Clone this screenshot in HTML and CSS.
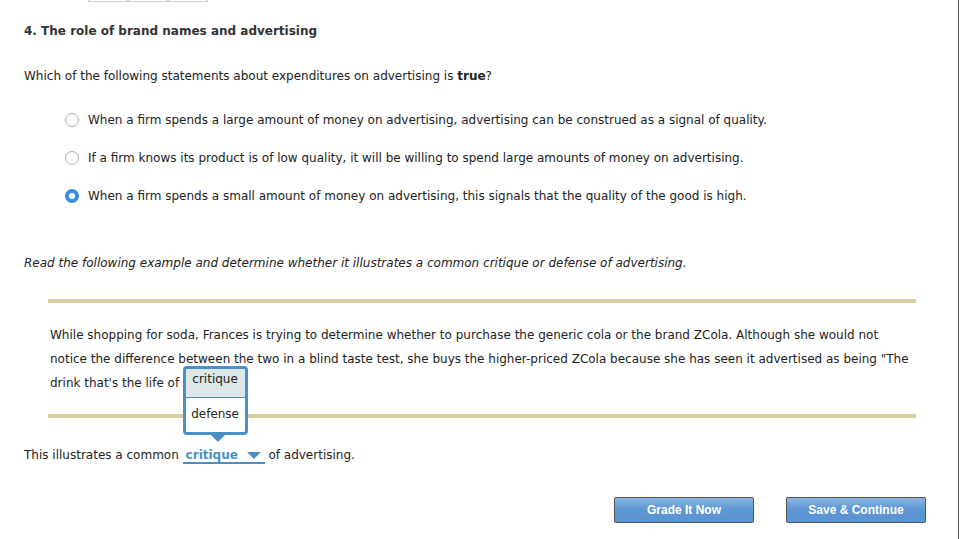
FILE: index.html
```html
<!DOCTYPE html>
<html>
    <head>
        <meta name="viewport" content="width=device-width, initial-scale=1.0">
        <title>Question 4</title>
        <link rel="stylesheet" href="styles.css">
    </head>
    <body>
        <div id="page">
            <div id="tabs"><span></span><span></span><span></span></div>
            <h1 id="title">4. The role of brand names and advertising</h1>
            <p id="question">Which of the following statements about expenditures on advertising is <b>true</b>?</p>
            <ul id="options">
                <li><span class="radio"></span>When a firm spends a large amount of money on advertising, advertising can be construed as a signal of quality.</li>
                <li><span class="radio"></span>If a firm knows its product is of low quality, it will be willing to spend large amounts of money on advertising.</li>
                <li><span class="radio on"></span>When a firm spends a small amount of money on advertising, this signals that the quality of the good is high.</li>
            </ul>
            <p id="instr">Read the following example and determine whether it illustrates a common critique or defense of advertising.</p>
            <div id="passage">
                <p>While shopping for soda, Frances is trying to determine whether to purchase the generic cola or the brand ZCola. Although she would not notice the difference between the two in a blind taste test, she buys the higher-priced ZCola because she has seen it advertised as being "The drink that's the life of the party."</p>
            </div>
            <p id="answer">This illustrates a common
                <span class="drop">critique<span class="caret"></span>
                    <span class="menu">
                        <span class="item sel">critique</span>
                        <span class="item">defense</span>
                    </span>
                </span>
                of advertising.</p>
            <div id="buttons">
                <a href="#" class="btn">Grade It Now</a>
                <a href="#" class="btn">Save &amp; Continue</a>
            </div>
        </div>
        <div id="edge"></div>
    </body>
</html>
```

FILE: styles.css
```css
body{
    margin:0;
    font-family:"DejaVu Sans",Verdana,sans-serif;
    font-size:12px;
    color:#222;
    background:#fff;
}
#page{
    padding:0 44px 0 24px;
    position:relative;
}
#edge{
    position:fixed;
    top:0;
    right:1px;
    width:1px;
    height:100%;
    background:#555;
}
#tabs{
    display:flex;
    margin-left:64px;
    height:2px;
}
#tabs span{
    width:38px;
    height:1px;
    border:1px solid #ccc;
    border-top:none;
}
#title{
    font-size:12px;
    font-weight:bold;
    color:#333;
    margin:21px 0 0;
    line-height:16px;
}
#question{
    margin:29px 0 0;
    line-height:16px;
}
#options{
    list-style:none;
    margin:17px 0 0;
    padding:0 0 0 41px;
}
#options li{
    display:flex;
    align-items:center;
    height:38px;
}
.radio{
    width:14px;
    height:14px;
    border:1px solid #b0b0b0;
    border-radius:50%;
    margin-right:9px;
    background:#fff;
    box-sizing:border-box;
    flex:none;
}
.radio.on{
    border:4.5px solid #3a8ee6;
}
#instr{
    font-style:italic;
    margin:40px 0 0;
    line-height:16px;
}
#passage{
    margin:28px 0 0 24px;
    border-top:4px solid #d8cfa0;
    border-bottom:4px solid #d8cfa0;
    padding:20px 0 19px 2px;
}
#passage p{
    margin:0;
    line-height:24px;
}
#answer{
    margin:29px 0 0;
    line-height:16px;
}
.drop{
    position:relative;
    display:inline-block;
    width:82px;
    color:#4a90c8;
    font-weight:bold;
    border-bottom:2px solid #4a90c8;
    padding-left:3px;
    box-sizing:border-box;
    line-height:14px;
}
.caret{
    position:absolute;
    right:4px;
    top:4px;
    border-left:7px solid transparent;
    border-right:7px solid transparent;
    border-top:7px solid #4a90c8;
}
.menu{
    position:absolute;
    z-index:2;
    left:0;
    bottom:27px;
    width:65px;
    border:3px solid #4a90c8;
    border-radius:4px;
    background:#fff;
    box-sizing:border-box;
    font-weight:normal;
    color:#222;
}
.menu:after{
    content:"";
    position:absolute;
    left:25px;
    bottom:-10px;
    border-left:7px solid transparent;
    border-right:7px solid transparent;
    border-top:7px solid #4a90c8;
}
.item{
    display:block;
    text-align:center;
    height:34px;
    line-height:33px;
}
.item.sel{
    height:28px;
    line-height:21px;
    background:#dde6e8;
    border-bottom:1px solid #4a90c8;
}
#buttons{
    display:flex;
    justify-content:flex-end;
    gap:32px;
    margin:33px -10px 0 0;
}
.btn{
    width:138px;
    height:24px;
    line-height:24px;
    text-align:center;
    color:#fff;
    font-family:"Liberation Sans",Arial,sans-serif;
    font-weight:bold;
    font-size:12px;
    text-decoration:none;
    background:linear-gradient(#8cb6e4,#5e98d4 45%,#5a94d0);
    border:1px solid #555;
    border-radius:2px;
    box-shadow:0 1px 1px rgba(0,0,0,.3);
}
```
